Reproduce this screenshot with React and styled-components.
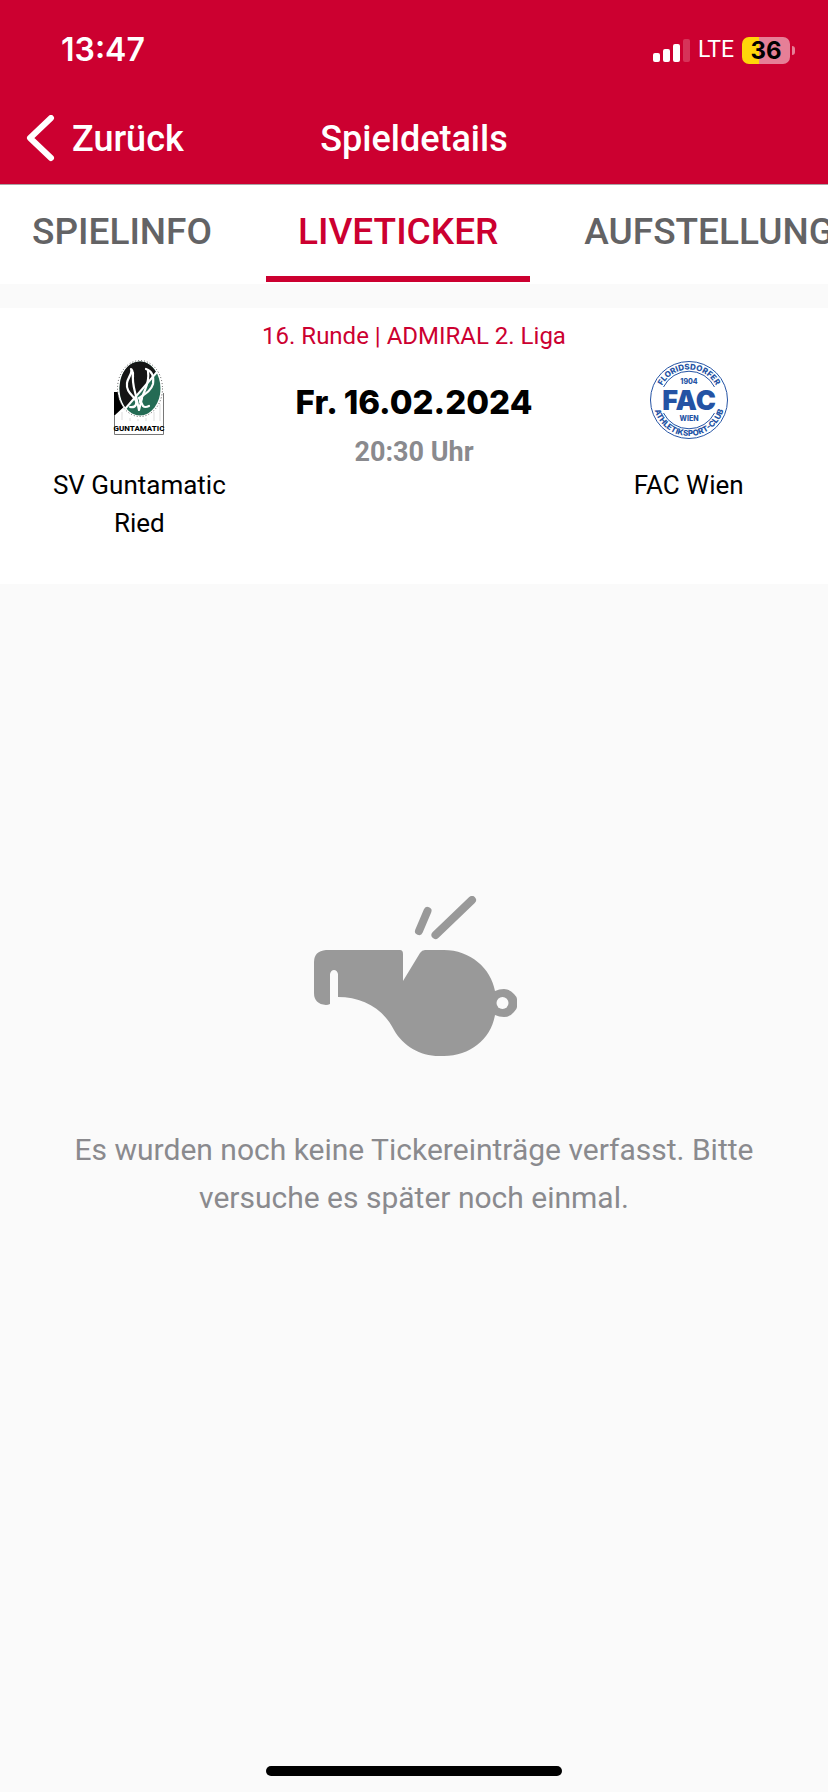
import React from "react";
import styled, { createGlobalStyle } from "styled-components";

const RED = "#cc0030";
const BLUE = "#2453a4";
const FONT = 'Roboto, "Open Sans", sans-serif';

const GlobalStyle = createGlobalStyle`
  *, *::before, *::after { box-sizing: border-box; }
  body {
    margin: 0;
    background: #fafafa;
    color: #000;
    font-family: ${FONT};
  }
  button { font: inherit; border: 0; padding: 0; background: none; cursor: pointer; }
`;

const Screen = styled.div`
  display: flex;
  flex-direction: column;
  min-height: 100vh;
  overflow-x: hidden;
`;

const TopArea = styled.header`
  background: ${RED};
  color: #fff;
  border-bottom: 1px solid #a9a3a5;
`;

const StatusBar = styled.div`
  display: flex;
  align-items: center;
  justify-content: space-between;
  height: 100px;
  padding: 0 33px 0 61px;
  font-family: Inter, sans-serif;
`;

const Clock = styled.time`
  font-size: 32px;
  font-weight: 600;
  line-height: 40px;
`;

const StatusIcons = styled.div`
  display: flex;
  align-items: center;
  gap: 8px;
`;

const Network = styled.span`
  font-size: 23px;
  line-height: 28px;
  font-family: ${FONT};
`;

const Battery = styled.div`
  display: flex;
  align-items: center;
  gap: 2px;
`;

const BatteryBody = styled.div`
  width: 48px;
  height: 27px;
  border-radius: 7px;
  background: linear-gradient(to right, #ffd60a ${(p) => p.$level}%, #e67f97 ${(p) => p.$level}%);
  color: #000;
  font-size: 24px;
  font-weight: 700;
  line-height: 27px;
  text-align: center;
`;

const BatteryCap = styled.div`
  width: 3px;
  height: 9px;
  border-radius: 0 3px 3px 0;
  background: #e67f97;
`;

const NavBar = styled.nav`
  display: grid;
  grid-template-columns: 1fr auto 1fr;
  align-items: center;
  height: 84px;
  padding: 0 24px 6px;
`;

const BackButton = styled.button`
  display: flex;
  align-items: center;
  gap: 14px;
  justify-self: start;
  color: #fff;
  font-size: 36px;
  font-weight: 500;
  line-height: 48px;
`;

const Title = styled.h1`
  margin: 0;
  font-size: 36px;
  font-weight: 500;
  line-height: 48px;
`;

const Tabs = styled.div`
  display: flex;
  gap: 22px;
  height: 99px;
  background: #fff;
  overflow: hidden;
`;

const Tab = styled.button`
  flex: none;
  height: 97px;
  padding: 2px 32px 0;
  border-bottom: 6px solid ${(p) => (p.$active ? RED : "transparent")};
  color: ${(p) => (p.$active ? RED : "#636365")};
  font-size: 37px;
  font-weight: 500;
  line-height: 48px;
`;

const MatchCard = styled.section`
  margin-top: 24px;
  padding: 8px 2px 42px;
  background: #fff;
  text-align: center;
`;

const Round = styled.p`
  margin: 0 0 4px;
  color: ${RED};
  font-size: 24px;
  font-weight: 400;
  line-height: 40px;
`;

const MatchGrid = styled.div`
  display: grid;
  grid-template-columns: 1fr 1fr 1fr;
`;

const Team = styled.div`
  display: flex;
  flex-direction: column;
  align-items: center;
  gap: 26px;
  padding: 0 32px;
`;

const TeamName = styled.span`
  font-size: 26px;
  font-weight: 400;
  line-height: 38px;
`;

const Kickoff = styled.div`
  padding-top: 16px;
  white-space: nowrap;
`;

const MatchDate = styled.div`
  font-family: Inter, sans-serif;
  font-size: 33px;
  font-weight: 800;
  line-height: 52px;
`;

const MatchTime = styled.div`
  color: #8a8a8e;
  font-size: 27px;
  font-weight: 700;
  line-height: 48px;
`;

const EmptyState = styled.main`
  flex: 1;
  display: flex;
  flex-direction: column;
  align-items: center;
  gap: 70px;
  padding: 312px 64px 0;
`;

const EmptyText = styled.p`
  margin: 0;
  color: #8a8a8e;
  font-size: 30px;
  font-weight: 400;
  line-height: 48px;
  text-align: center;
`;

const HomeIndicator = styled.div`
  align-self: center;
  width: 296px;
  height: 10px;
  margin-bottom: 16px;
  border-radius: 5px;
  background: #000;
`;

const SignalIcon = () => (
  <svg width="37" height="23" viewBox="0 0 37 23" fill="#fff" aria-hidden="true">
    <rect x="0" y="14" width="7" height="9" rx="2" />
    <rect x="10" y="10" width="7" height="13" rx="2" />
    <rect x="20" y="5" width="7" height="18" rx="2" />
    <rect x="30" y="0" width="7" height="23" rx="2" opacity="0.2" />
  </svg>
);

const BackIcon = () => (
  <svg width="34" height="48" viewBox="0 0 34 48" fill="none" stroke="#fff" strokeWidth="6" strokeLinecap="round" strokeLinejoin="round" aria-hidden="true">
    <path d="M27 3L6 23L27 43" />
  </svg>
);

const RiedLogo = () => (
  <svg width="80" height="80" viewBox="0 0 80 80" role="img" aria-label="SV Guntamatic Ried">
    <path d="M15 32V56L29 43V32Z" fill="#000" />
    <path d="M15.500 56V74.500H64.500V33" fill="none" stroke="#777" strokeWidth="1" />
    <path d="M23 52V60M31 58V61M39 59V61M47 58V61M55 52V61M61 44V61" stroke="#ddd" strokeWidth="1" />
    <ellipse cx="41" cy="28.500" rx="22.500" ry="28" fill="#fff" stroke="#555" strokeWidth="1" strokeDasharray="1 2" />
    <ellipse cx="41" cy="28.500" rx="20.500" ry="27" fill="#246b54" />
    <path d="M27 48C15 34 20 2 41 1.500C48 1.500 53 6 57 12Z" fill="#151515" />
    <path d="M58 12L26 49" stroke="#fff" strokeWidth="2" />
    <g fill="none" stroke="#fff" strokeWidth="2.200" strokeLinecap="round" strokeLinejoin="round">
      <path d="M34 17C34 12 33 9 32 9C34 13 29 17 28 23C27 31 32 34 36 39C39 43 37 48 31 47" />
      <path d="M34 13C33 23 35 28 37 36L40 50L43 38" />
      <path d="M47 9C53 11 55 17 54 24C52 31 46 34 40 38L44 46C46 48 48 47 50 46" />
      <path d="M49 11C50 18 49 23 46 30L41 42" />
    </g>
    <text x="40" y="71" textAnchor="middle" fontFamily="Roboto, sans-serif" fontSize="8" fontWeight="800">GUNTAMATIC</text>
  </svg>
);

const FacLogo = () => (
  <svg width="80" height="80" viewBox="0 0 80 80" fill={BLUE} fontFamily="Inter, sans-serif" fontWeight="800" textAnchor="middle" role="img" aria-label="FAC Wien">
    <defs>
      <path id="fac-top" d="M9.500 40A30.500 30.500 0 0 1 70.500 40" />
      <path id="fac-bottom" d="M4 40A36 36 0 0 0 76 40" />
    </defs>
    <g fill="none" stroke={BLUE} strokeWidth="1">
      <circle cx="40" cy="40" r="38.500" />
      <path d="M14.500 27A28.500 28.500 0 0 1 65.500 27" />
      <path d="M14.500 53A28.500 28.500 0 0 0 65.500 53" />
    </g>
    <text fontSize="8"><textPath href="#fac-top" startOffset="50%">FLORIDSDORFER</textPath></text>
    <text fontSize="8"><textPath href="#fac-bottom" startOffset="50%">ATHLETIKSPORT-CLUB</textPath></text>
    <text x="40" y="24" fontSize="7">1904</text>
    <text x="40" y="50" fontSize="27" fontWeight="900">FAC</text>
    <text x="40" y="61" fontSize="7">WIEN</text>
  </svg>
);

const WhistleIcon = () => (
  <svg width="208" height="160" viewBox="-4 0 208 160" fill="#999" aria-hidden="true">
    <path d="M12 54H86Q89 54 89 58V85L106 57Q108 54 111 54H130C156 54 177 72 181 95Q185 93 190 93Q196 93 200 98Q203 101 203 103V111Q203 113 200 116Q196 121 190 121Q185 121 181 119C177 143 156 160 130 160H125C106 160 89 150 80 134C69 112 48 101 24 101V78Q23 74 20 74Q17 74 16 78V108Q14 109 12 109Q0 108 0 97V66Q0 55 12 54Z" />
    <circle cx="188.500" cy="107" r="6" fill="#fafafa" />
    <g fill="none" stroke="#999" strokeWidth="8" strokeLinecap="round">
      <path d="M113.500 15L105 35" />
      <path d="M158 4L121.500 39" />
    </g>
  </svg>
);

export default function App() {
  return (
    <Screen>
      <GlobalStyle />
      <TopArea>
        <StatusBar>
          <Clock>13:47</Clock>
          <StatusIcons>
            <SignalIcon />
            <Network>LTE</Network>
            <Battery>
              <BatteryBody $level={36}>36</BatteryBody>
              <BatteryCap />
            </Battery>
          </StatusIcons>
        </StatusBar>
        <NavBar>
          <BackButton type="button">
            <BackIcon />
            Zurück
          </BackButton>
          <Title>Spieldetails</Title>
        </NavBar>
      </TopArea>
      <Tabs role="tablist">
        <Tab type="button" role="tab" aria-selected="false">SPIELINFO</Tab>
        <Tab type="button" role="tab" aria-selected="true" $active>LIVETICKER</Tab>
        <Tab type="button" role="tab" aria-selected="false">AUFSTELLUNG</Tab>
      </Tabs>
      <MatchCard>
        <Round>16. Runde | ADMIRAL 2. Liga</Round>
        <MatchGrid>
          <Team>
            <RiedLogo />
            <TeamName>SV Guntamatic Ried</TeamName>
          </Team>
          <Kickoff>
            <MatchDate>Fr. 16.02.2024</MatchDate>
            <MatchTime>20:30 Uhr</MatchTime>
          </Kickoff>
          <Team>
            <FacLogo />
            <TeamName>FAC Wien</TeamName>
          </Team>
        </MatchGrid>
      </MatchCard>
      <EmptyState>
        <WhistleIcon />
        <EmptyText>Es wurden noch keine Tickereinträge verfasst. Bitte versuche es später noch einmal.</EmptyText>
      </EmptyState>
      <HomeIndicator />
    </Screen>
  );
}
